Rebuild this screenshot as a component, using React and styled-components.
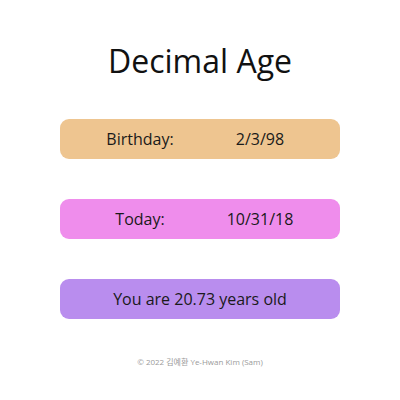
import React from "react";
import styled, { createGlobalStyle } from "styled-components";

const Global = createGlobalStyle`
  html, body { margin: 0; padding: 0; background: #fff; }
  body { font-family: "Open Sans", "Noto Sans CJK KR", sans-serif; color: #111; }
`;

const Page = styled.div`
  width: 400px;
  display: flex;
  flex-direction: column;
  align-items: center;
  padding-top: 38px;
`;

const Title = styled.h1`
  margin: 0 0 35px;
  font-size: 32px;
  font-weight: 400;
  line-height: 46px;
  color: #111;
`;

const Card = styled.div`
  width: 280px;
  height: 40px;
  box-sizing: border-box;
  border-radius: 9px;
  background: ${(p) => p.$bg};
  display: ${(p) => (p.$split ? "grid" : "flex")};
  grid-template-columns: 120px 120px;
  justify-content: center;
  align-items: center;
  font-size: 16px;
  margin-bottom: 40px;
  color: #1a1a1a;
`;

const Cell = styled.span`
  text-align: center;
`;

const Footer = styled.div`
  margin-top: -3px;
  font-size: 8px;
  color: #9a9a9a;
`;

export default function App() {
  return (
    <>
      <Global />
      <Page>
        <Title>Decimal Age</Title>
        <Card $bg="#eec590" $split>
          <Cell>Birthday:</Cell>
          <Cell>2/3/98</Cell>
        </Card>
        <Card $bg="#ef8dec" $split>
          <Cell>Today:</Cell>
          <Cell>10/31/18</Cell>
        </Card>
        <Card $bg="#b98dee">You are 20.73 years old</Card>
        <Footer>© 2022 김예환 Ye-Hwan Kim (Sam)</Footer>
      </Page>
    </>
  );
}
